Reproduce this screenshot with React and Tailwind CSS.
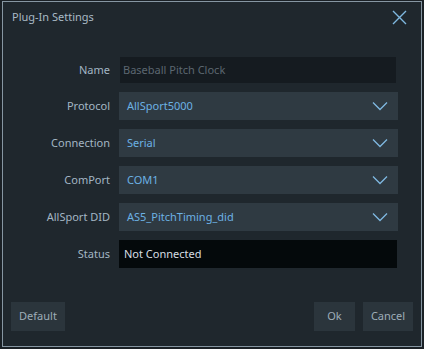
import React from "react";

const font = { fontFamily: '"Noto Sans", "Open Sans", sans-serif' };

function Chevron() {
  return (
    <svg width="16" height="10" viewBox="0 0 16 10" className="shrink-0">
      <path d="M1 1.5 L8 8.5 L15 1.5" fill="none" stroke="#7fb8e0" strokeWidth="1.3" />
    </svg>
  );
}

function Row({ label, children }) {
  return (
    <div className="flex items-center">
      <div className="w-[110px] pr-[9px] text-right text-[11px] text-[#a3b6c4]">{label}</div>
      {children}
    </div>
  );
}

function Select({ value }) {
  return (
    <div className="flex h-[28px] w-[279px] items-center justify-between bg-[#2f3a42] pl-[8px] pr-[10px] text-[11px] text-[#6cb1e4]">
      <span>{value}</span>
      <Chevron />
    </div>
  );
}

export default function App() {
  return (
    <div className="h-[349px] w-[424px] bg-[#1a2025] px-[2px] pb-[2px] pt-[1px]" style={font}>
      <div className="flex h-full flex-col border border-[#8696a2] bg-[#1f272d]">
        {/* Title bar */}
        <div className="flex h-[30px] items-center justify-between pl-[9px] pr-[14px]">
          <span className="text-[11px] text-[#a9bac6]">Plug-In Settings</span>
          <svg width="15" height="15" viewBox="0 0 15 15">
            <path d="M1 1 L14 14 M14 1 L1 14" stroke="#7fb8e0" strokeWidth="1.4" />
          </svg>
        </div>

        {/* Fields */}
        <div className="mt-[25px] flex flex-col gap-[9px] pl-[6px]">
          <Row label="Name">
            <div className="ml-[1px] flex h-[26px] w-[276px] items-center bg-[#151b20] pl-[3px] text-[11px] text-[#5c6770]">
              Baseball Pitch Clock
            </div>
          </Row>
          <Row label="Protocol">
            <Select value="AllSport5000" />
          </Row>
          <Row label="Connection">
            <Select value="Serial" />
          </Row>
          <Row label="ComPort">
            <Select value="COM1" />
          </Row>
          <Row label="AllSport DID">
            <Select value="AS5_PitchTiming_did" />
          </Row>
          <Row label="Status">
            <div className="flex h-[28px] w-[278px] items-center bg-[#04090b] pl-[5px] text-[11px] text-[#d6dde2]">
              Not Connected
            </div>
          </Row>
        </div>

        {/* Buttons */}
        <div className="mt-auto mb-[15px] flex items-center px-[8px] text-[11px] text-[#9eadb8]">
          <button className="h-[29px] w-[54px] bg-[#2b353c]">Default</button>
          <div className="flex-1" />
          <button className="h-[29px] w-[41px] bg-[#2b353c]">Ok</button>
          <button className="ml-[8px] h-[29px] w-[50px] bg-[#2b353c]">Cancel</button>
        </div>
      </div>
    </div>
  );
}
